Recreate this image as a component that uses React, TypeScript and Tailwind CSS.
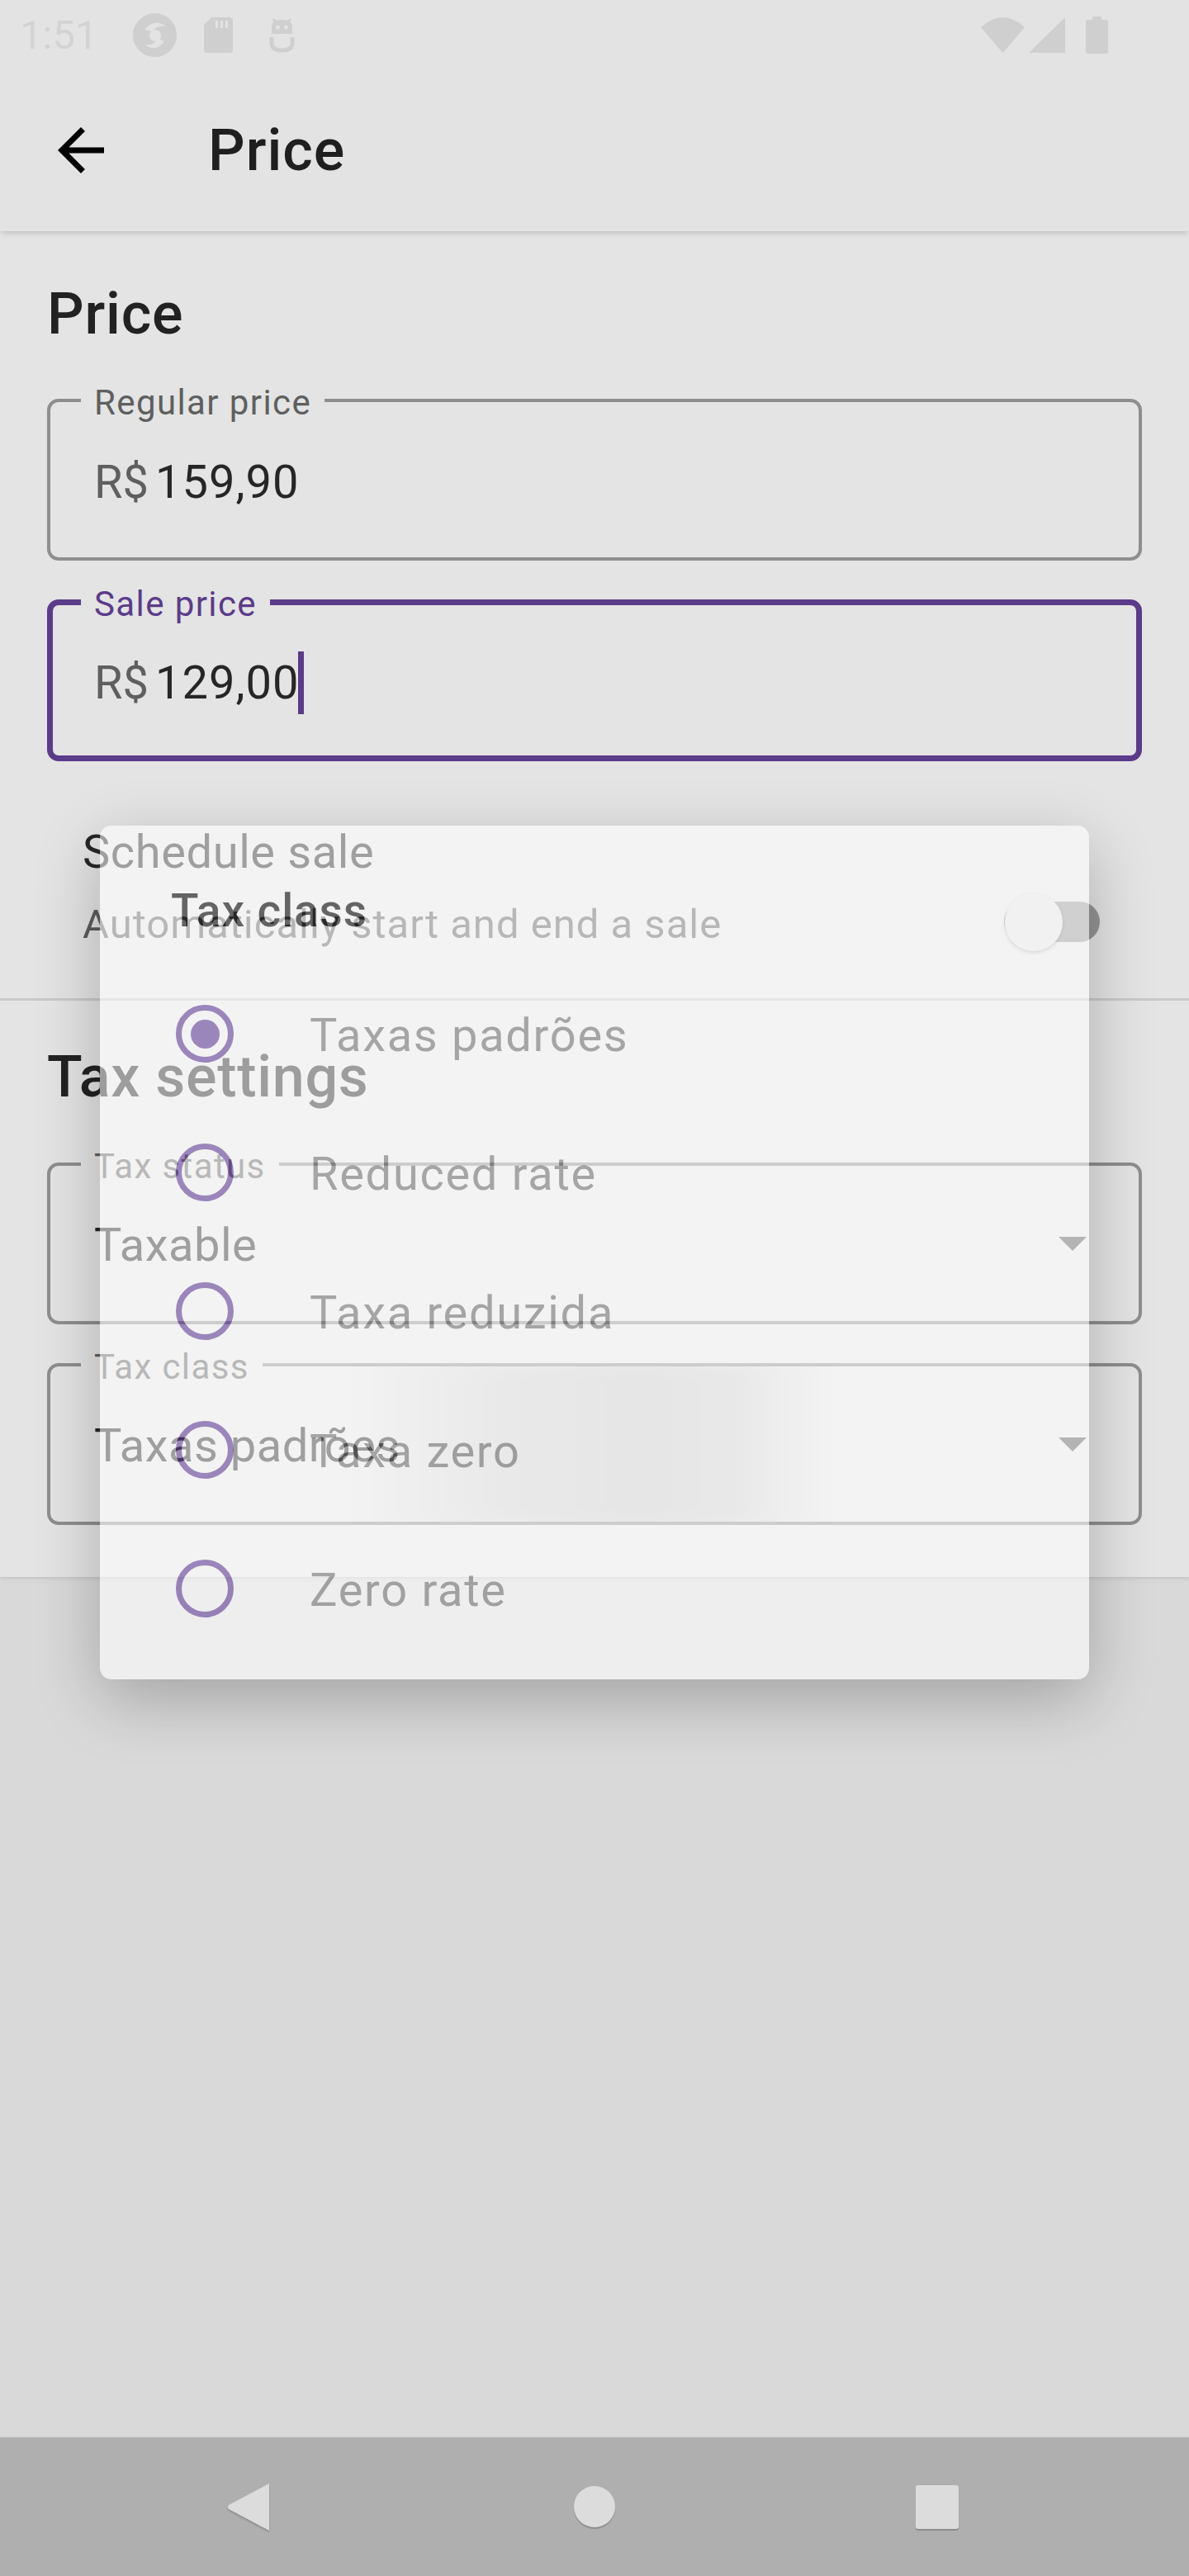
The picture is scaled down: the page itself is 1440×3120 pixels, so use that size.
import React from 'react';

const TAX_CLASSES = ['Taxas padrões', 'Reduced rate', 'Taxa reduzida', 'Taxa zero', 'Zero rate'];

function StatusBar() {
  return (
    <div className="h-[84px] shrink-0 bg-[#e3e3e3] flex items-center pl-[24px] pr-[98px]">
      <span className="text-[49px] leading-none text-[#d3d3d3]">1:51</span>
      {/* app icons */}
      <svg className="ml-[43px]" width="53" height="53" viewBox="0 0 53 53">
        <circle cx="26.5" cy="26.5" r="26.5" fill="#cfcfcf" />
        <path d="M14 20 Q26 6 40 16 Q30 14 24 22 Z" fill="#e3e3e3" />
        <path d="M38 34 Q28 48 14 38 Q24 40 30 31 Z" fill="#e3e3e3" />
        <circle cx="27" cy="27" r="7" fill="#e3e3e3" />
      </svg>
      <svg className="ml-[33px]" width="35" height="43" viewBox="0 0 35 43">
        <path d="M9 0 H31 a4 4 0 0 1 4 4 V39 a4 4 0 0 1 -4 4 H4 a4 4 0 0 1 -4 -4 V9 Z" fill="#cfcfcf" />
        <rect x="14" y="4" width="3" height="9" fill="#e3e3e3" />
        <rect x="20" y="4" width="3" height="9" fill="#e3e3e3" />
        <rect x="26" y="4" width="3" height="9" fill="#e3e3e3" />
      </svg>
      <svg className="ml-[44px]" width="31" height="43" viewBox="0 0 31 43">
        <path d="M3 12 Q3 3 15.5 3 Q28 3 28 12 V20 H3 Z" fill="#cfcfcf" />
        <circle cx="10.5" cy="12" r="2.5" fill="#e3e3e3" />
        <circle cx="20.5" cy="12" r="2.5" fill="#e3e3e3" />
        <path d="M5 2 L8 6 M26 2 L23 6" stroke="#cfcfcf" strokeWidth="3" />
        <path d="M3 24 V31 Q3 40 15.5 40 Q28 40 28 31 V24" stroke="#cfcfcf" strokeWidth="5" fill="none" />
      </svg>
      <div className="flex-1" />
      <svg width="53" height="43" viewBox="0 0 53 43">
        <path d="M26.5 43 L0 12 Q26.5 -12 53 12 Z" fill="#cfcfcf" />
      </svg>
      <svg className="ml-[5px]" width="44" height="43" viewBox="0 0 44 43">
        <path d="M44 0 V43 H0 Z" fill="#cfcfcf" />
      </svg>
      <svg className="ml-[25px]" width="27" height="45" viewBox="0 0 27 45">
        <rect x="8" y="0" width="11" height="6" fill="#cfcfcf" />
        <rect x="0" y="4" width="27" height="41" rx="3" fill="#cfcfcf" />
      </svg>
    </div>
  );
}

function AppBar() {
  return (
    <div className="h-[196px] shrink-0 bg-[#e3e3e3] flex items-center relative z-10 shadow-[0_5px_6px_-2px_rgba(0,0,0,0.14)]">
      <svg className="ml-[56px]" width="84" height="84" viewBox="0 0 24 24">
        <path d="M20 11H7.83l5.59-5.59L12 4l-8 8 8 8 1.41-1.41L7.83 13H20v-2z" fill="#000" />
      </svg>
      <span className="ml-[112px] text-[70px] leading-none font-medium tracking-[1px] text-[#1f1f1f]">Price</span>
    </div>
  );
}

function PriceField({ label, value, focused }: { label: string; value: string; focused?: boolean }) {
  return (
    <div
      className={
        focused
          ? 'relative h-[196px] rounded-[14px] border-[7px] border-[#5b3b8a] flex items-center pl-[50px] pt-[6px]'
          : 'relative h-[196px] rounded-[14px] border-[4px] border-[#8e8e8e] flex items-center pl-[53px] pt-[6px]'
      }
    >
      <span
        className={
          focused
            ? 'absolute left-[34px] top-[-26px] px-[16px] bg-[#e4e4e4] text-[42px] leading-[50px] tracking-[1.4px] text-[#5b3b8a]'
            : 'absolute left-[37px] top-[-24px] px-[16px] bg-[#e4e4e4] text-[42px] leading-[50px] tracking-[1.4px] text-[#5f5f5f]'
        }
      >
        {label}
      </span>
      <span className="text-[56px] leading-[76px] text-[#5f5f5f]">R$</span>
      <span className="ml-[8px] text-[56px] leading-[76px] tracking-[1px] text-[#262626]">{value}</span>
      {focused && <span className="inline-block w-[7px] h-[76px] -ml-[1px] bg-[#5b3b8a]" />}
    </div>
  );
}

function SelectField({ label, value, ripple }: { label: string; value: string; ripple?: boolean }) {
  return (
    <div className="relative h-[196px] rounded-[14px] border-[4px] border-[#8e8e8e] flex items-center pl-[53px]">
      {ripple && (
        <div className="absolute inset-0 overflow-hidden rounded-[10px]">
          <div className="absolute top-[-10px] bottom-[-10px] left-[370px] w-[570px] bg-[linear-gradient(to_right,rgba(0,0,0,0)_0%,rgba(0,0,0,0.09)_30%,rgba(0,0,0,0.13)_60%,rgba(0,0,0,0.1)_80%,rgba(0,0,0,0)_100%)] blur-[14px]" />
        </div>
      )}
      <span className="absolute left-[37px] top-[-24px] px-[16px] bg-[#e4e4e4] text-[42px] leading-[50px] tracking-[1.4px] text-[#5f5f5f]">
        {label}
      </span>
      <span className="relative flex-1 pt-[3px] text-[56px] leading-[76px] tracking-[0.5px] text-[#262626]">{value}</span>
      <svg className="relative mr-[63px]" width="34" height="17" viewBox="0 0 34 17">
        <path d="M0 0 H34 L17 17 Z" fill="#575757" />
      </svg>
    </div>
  );
}

function Content() {
  return (
    <div className="shrink-0 bg-[#e4e4e4] pt-[58px] pb-[63px] shadow-[0_2px_4px_rgba(0,0,0,0.1)]">
      <div className="px-[57px]">
        <h2 className="text-[70px] leading-[84px] font-medium tracking-[0.8px] text-[#222222]">Price</h2>
        <div className="mt-[61px]">
          <PriceField label="Regular price" value="159,90" />
        </div>
        <div className="mt-[47px]">
          <PriceField label="Sale price" value="129,00" focused />
        </div>
      </div>

      {/* Schedule sale */}
      <div className="mt-[72px] flex items-end justify-between pl-[100px] pr-[108px]">
        <div>
          <div className="text-[56px] leading-[76px] tracking-[0.6px] text-[#262626]">Schedule sale</div>
          <div className="mt-[15px] text-[49px] leading-[70px] tracking-[1px] text-[#5c5c5c]">
            Automatically start and end a sale
          </div>
        </div>
        <div className="relative w-[116px] h-[70px] mb-[3px]">
          <div className="absolute left-0 right-0 top-[10px] h-[49px] rounded-full bg-[#959595]" />
          <div className="absolute left-[1px] top-0 w-[70px] h-[70px] rounded-full bg-[#e0e0e0] shadow-[0_2px_4px_rgba(0,0,0,0.25)]" />
        </div>
      </div>

      <div className="mt-[54px] h-[3px] bg-[#c9c9c9]" />

      <div className="px-[57px]">
        <h2 className="mt-[50px] text-[70px] leading-[84px] font-medium tracking-[0.7px] text-[#222222]">Tax settings</h2>
        <div className="mt-[62px]">
          <SelectField label="Tax status" value="Taxable" />
        </div>
        <div className="mt-[47px]">
          <SelectField label="Tax class" value="Taxas padrões" ripple />
        </div>
      </div>
    </div>
  );
}

function NavBar() {
  return (
    <div className="h-[168px] shrink-0 bg-[#afafaf] flex items-center">
      <svg className="ml-[275px] drop-shadow-[0_2px_1px_rgba(0,0,0,0.2)]" width="51" height="57" viewBox="0 0 51 57">
        <path d="M51 0 V57 L2 31 Q0 28.5 2 26 Z" fill="#dcdcdc" />
      </svg>
      <div className="ml-[369px] w-[50px] h-[50px] rounded-full bg-[#dcdcdc] shadow-[0_2px_1px_rgba(0,0,0,0.2)]" />
      <div className="ml-[364px] w-[52px] h-[53px] rounded-[3px] bg-[#dcdcdc] shadow-[0_2px_1px_rgba(0,0,0,0.2)]" />
    </div>
  );
}

function TaxClassDialog() {
  return (
    <div className="absolute left-[121px] top-[1000px] w-[1198px] h-[1034px] rounded-[14px] bg-white opacity-[0.556] shadow-[0_24px_80px_rgba(0,0,0,0.45)] pt-[70px]">
      <div className="pl-[86px] text-[55px] leading-[66px] font-medium tracking-[0.9px] text-black">Tax class</div>
      <div className="mt-[32px]">
        {TAX_CLASSES.map((name, i) => (
          <div key={name} className="h-[168px] flex items-center">
            <div className="ml-[92px] w-[70px] h-[70px] rounded-full border-[7px] border-[#613c9b] flex items-center justify-center">
              {i === 0 && <div className="w-[35px] h-[35px] rounded-full bg-[#613c9b]" />}
            </div>
            <span className="ml-[92px] pt-[3px] text-[56px] leading-[76px] tracking-[1.7px] text-[#757575]">{name}</span>
          </div>
        ))}
      </div>
    </div>
  );
}

export default function App() {
  return (
    <div className="relative w-[1440px] h-[3120px] overflow-hidden bg-[#d9d9d9] flex flex-col font-['Roboto',sans-serif]">
      <StatusBar />
      <AppBar />
      <Content />
      <div className="flex-1" />
      <NavBar />
      <TaxClassDialog />
    </div>
  );
}
